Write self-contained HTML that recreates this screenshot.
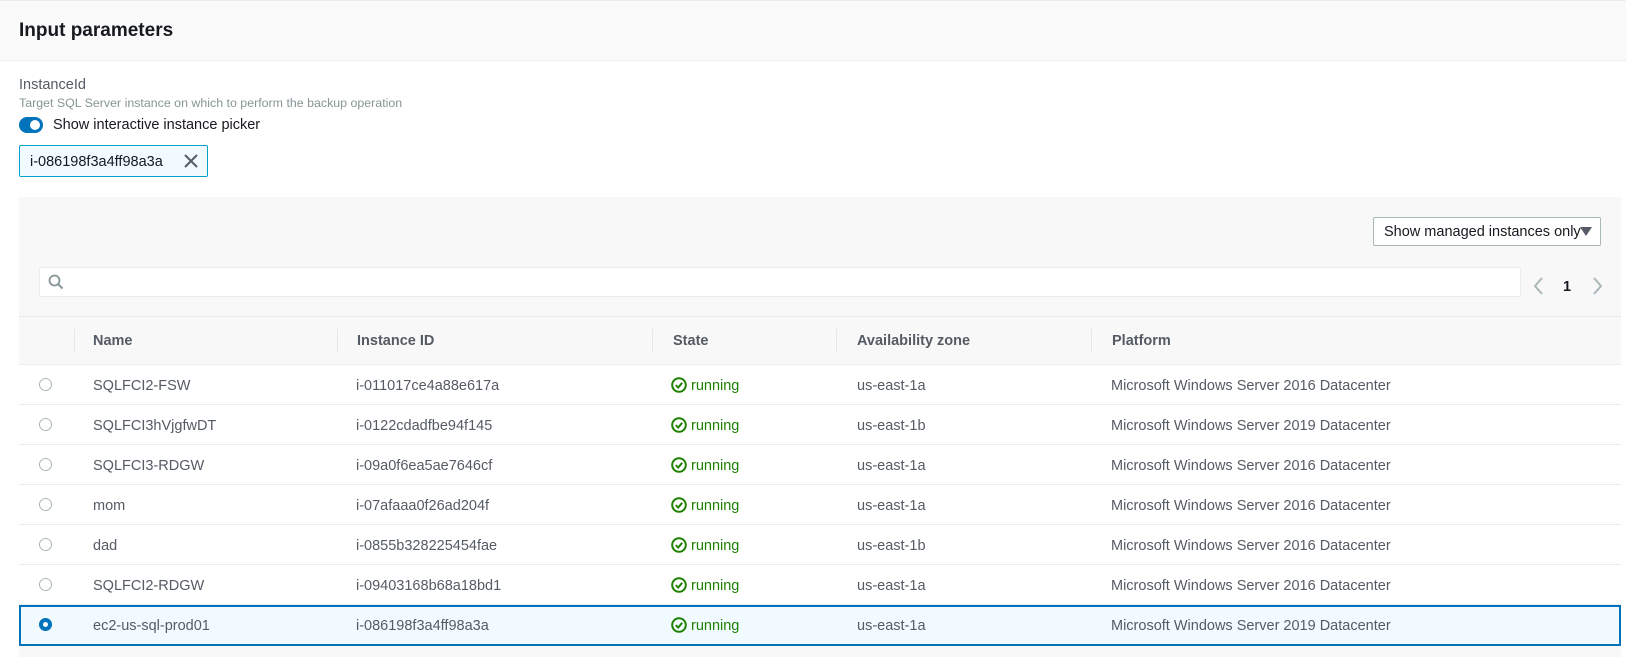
<!DOCTYPE html>
<html><head><meta charset="utf-8"><style>
*{margin:0;padding:0;box-sizing:border-box}
body{width:1626px;height:654px;overflow:hidden;background:#fff;font-family:"Liberation Sans",sans-serif;color:#16191f;font-size:14.5px;position:relative}
.a{position:absolute;white-space:nowrap}
.hdr{left:0;top:0;width:1626px;height:61px;background:#fafafa;border-top:1px solid #eaeded;border-bottom:1px solid #eaeded}
.panel{left:19px;top:197px;width:1602px;height:460px;background:#f8f8f8}
.row{left:19px;width:1602px;height:40px;background:#fff;border-bottom:1px solid #eaeded}
.radio{width:13px;height:13px;border:1px solid #aab7b8;border-radius:50%;background:#fff}
.th{font-weight:bold;color:#545b64;top:333px}
.div{width:1px;height:24px;background:#e5e8e8;top:329px}
.run{color:#1d8102}
</style></head><body>
<div class="a hdr"></div>
<div class="a" style="left:19px;top:20px;font-size:19px;font-weight:bold">Input parameters</div>
<div class="a" style="left:19px;top:77px;color:#545b64">InstanceId</div>
<div class="a" style="left:19px;top:96px;font-size:12.4px;color:#879596">Target SQL Server instance on which to perform the backup operation</div>
<div class="a" style="left:19px;top:117px;width:24px;height:16px;border-radius:8px;background:#0073bb"></div>
<div class="a" style="left:30px;top:120px;width:10px;height:10px;border-radius:50%;background:#fff"></div>
<div class="a" style="left:53px;top:117px">Show interactive instance picker</div>
<div class="a" style="left:19px;top:145px;width:189px;height:32px;background:#f1faff;border:1px solid #00a1c9;border-radius:2px"></div>
<div class="a" style="left:30px;top:154px">i-086198f3a4ff98a3a</div>
<svg class="a" style="left:184px;top:154px" width="14" height="14" viewBox="0 0 14 14"><path d="M1 1L13 13M13 1L1 13" stroke="#545b64" stroke-width="2"/></svg>

<div class="a panel"></div>
<div class="a" style="left:1373px;top:217px;width:228px;height:29px;background:#fff;border:1px solid #aab7b8;border-radius:2px"></div>
<div class="a" style="left:1384px;top:224px">Show managed instances only</div>
<svg class="a" style="left:1580px;top:227px" width="12" height="10"><path d="M0 0H12L6 9Z" fill="#545b64"/></svg>
<div class="a" style="left:39px;top:267px;width:1482px;height:30px;background:#fff;border:1px solid #eaeded"></div>
<svg class="a" style="left:48px;top:274px" width="16" height="16" viewBox="0 0 16 16"><circle cx="6.5" cy="6.5" r="5" fill="none" stroke="#879596" stroke-width="1.8"/><path d="M10 10L14.5 14.5" stroke="#879596" stroke-width="2"/></svg>
<svg class="a" style="left:1532px;top:277px" width="12" height="18"><path d="M10 1L3 9L10 17" fill="none" stroke="#aab7b8" stroke-width="2"/></svg>
<div class="a" style="left:1563px;top:279px;font-weight:bold">1</div>
<svg class="a" style="left:1592px;top:277px" width="12" height="18"><path d="M2 1L9 9L2 17" fill="none" stroke="#aab7b8" stroke-width="2"/></svg>
<div class="a" style="left:19px;top:316px;width:1602px;height:1px;background:#eaeded"></div>
<div class="a" style="left:19px;top:364px;width:1602px;height:1px;background:#eaeded"></div>
<div class="a div" style="left:74px"></div>
<div class="a div" style="left:337px"></div>
<div class="a div" style="left:652px"></div>
<div class="a div" style="left:836px"></div>
<div class="a div" style="left:1091px"></div>
<div class="a th" style="left:93px">Name</div>
<div class="a th" style="left:357px">Instance ID</div>
<div class="a th" style="left:673px">State</div>
<div class="a th" style="left:857px">Availability zone</div>
<div class="a th" style="left:1112px">Platform</div>

<div id="rows"></div>
<script>
var d=[["SQLFCI2-FSW","i-011017ce4a88e617a","us-east-1a","2016"],["SQLFCI3hVjgfwDT","i-0122cdadfbe94f145","us-east-1b","2019"],["SQLFCI3-RDGW","i-09a0f6ea5ae7646cf","us-east-1a","2016"],["mom","i-07afaaa0f26ad204f","us-east-1a","2016"],["dad","i-0855b328225454fae","us-east-1b","2016"],["SQLFCI2-RDGW","i-09403168b68a18bd1","us-east-1a","2016"],["ec2-us-sql-prod01","i-086198f3a4ff98a3a","us-east-1a","2019"]];
var h="";
d.forEach(function(r,i){var t=365+40*i,sel=i==6;
h+='<div class="a row" style="top:'+t+'px;'+(sel?'background:#f1faff;border:2px solid #0073bb;height:41px':'')+'"></div>';
h+=sel?'<div class="a radio" style="left:39px;top:'+(t+13)+'px;border:4px solid #0073bb"></div>':'<div class="a radio" style="left:39px;top:'+(t+13)+'px"></div>';
var ty=t+13;
h+='<div class="a" style="left:93px;top:'+ty+'px;color:#545b64">'+r[0]+'</div>';
h+='<div class="a" style="left:356px;top:'+ty+'px;color:#545b64">'+r[1]+'</div>';
h+='<svg class="a" style="left:671px;top:'+(t+12)+'px" width="16" height="16" viewBox="0 0 16 16"><circle cx="8" cy="8" r="6.8" fill="none" stroke="#1d8102" stroke-width="2"/><path d="M4.8 8.2L7.2 10.5L11.2 5.8" fill="none" stroke="#1d8102" stroke-width="2"/></svg>';
h+='<div class="a run" style="left:691px;top:'+ty+'px">running</div>';
h+='<div class="a" style="left:857px;top:'+ty+'px;color:#545b64">'+r[2]+'</div>';
h+='<div class="a" style="left:1111px;top:'+ty+'px;color:#545b64">Microsoft Windows Server '+r[3]+' Datacenter</div>';
});
document.getElementById("rows").innerHTML=h;
</script>
</body></html>
